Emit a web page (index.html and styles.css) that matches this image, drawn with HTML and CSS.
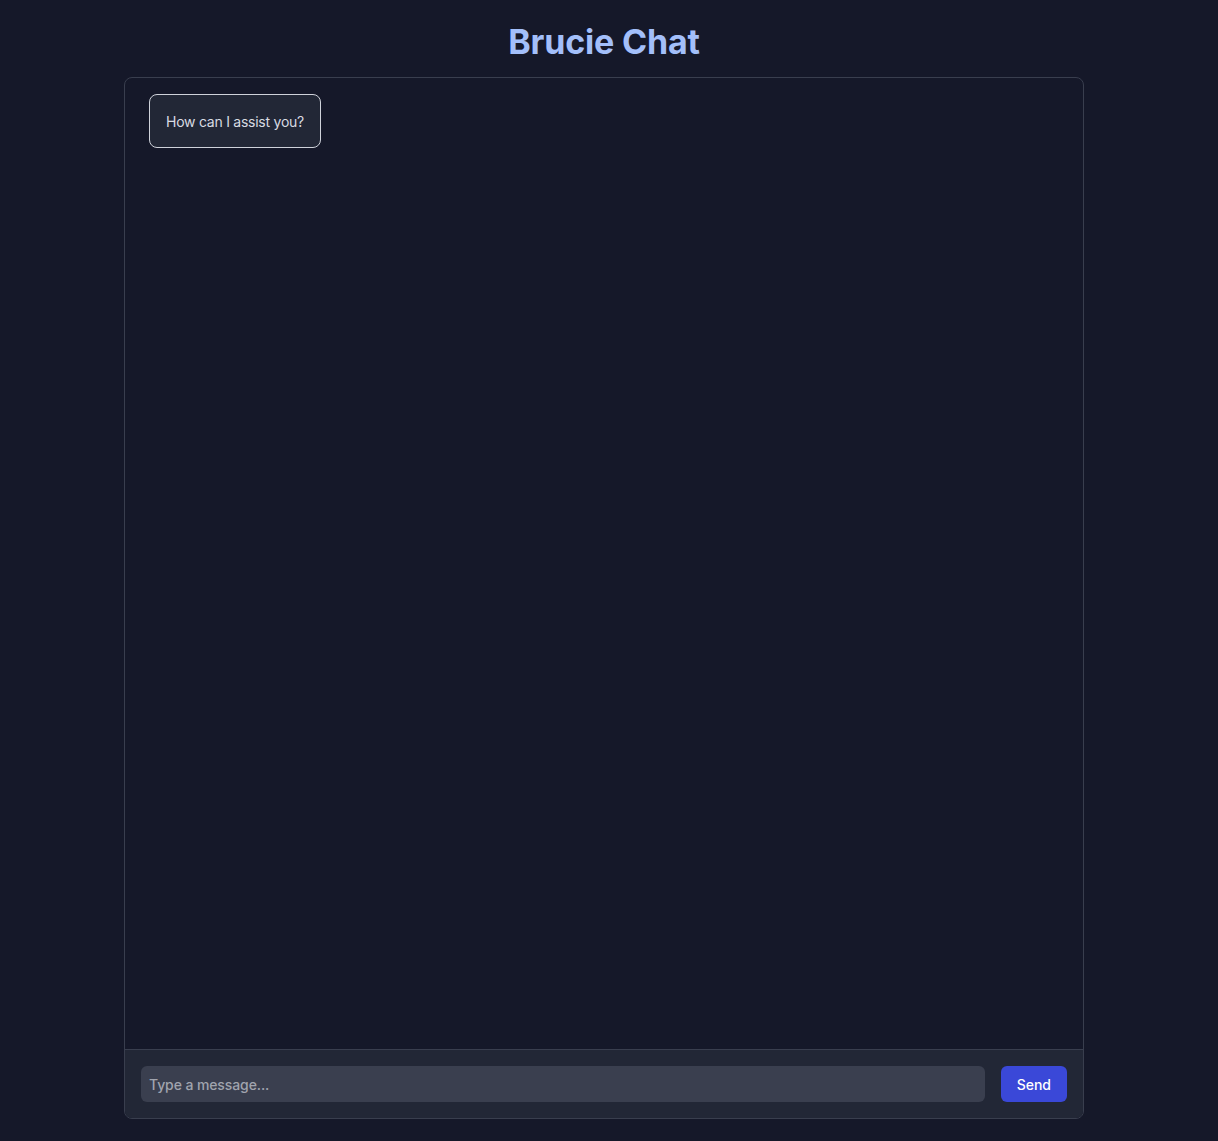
FILE: index.html
```html
<!DOCTYPE html>
<html lang="en">
<head>
<meta charset="utf-8">
<title>Brucie Chat</title>
<link rel="stylesheet" href="styles.css">
</head>
<body>
<div class="app">
  <header class="header">
    <h1 class="title">Brucie Chat</h1>
  </header>
  <section class="chat">
    <div class="messages">
      <div class="bubble">How can I assist you?</div>
    </div>
    <form class="composer">
      <input class="input" type="text" placeholder="Type a message...">
      <button class="send" type="button">Send</button>
    </form>
  </section>
</div>
</body>
</html>
```

FILE: styles.css
```css
* { box-sizing: border-box; }
html, body {
  margin: 0;
  background: #151829;
  font-family: Inter, "Noto Sans", "Liberation Sans", sans-serif;
}
body {
  padding-right: 10px;
}
.app {
  width: 960px;
  margin: 0 auto;
  display: flex;
  flex-direction: column;
}
.header {
  height: 77px;
  display: flex;
  align-items: center;
  justify-content: center;
  padding-top: 7px;
}
.title {
  margin: 0;
  font-size: 34px;
  line-height: 40px;
  font-weight: 700;
  letter-spacing: -0.2px;
  color: #a3bffa;
}
.chat {
  height: 1042px;
  border: 1px solid #393e4e;
  border-radius: 8px;
  display: flex;
  flex-direction: column;
  overflow: hidden;
  background: #151829;
}
.messages {
  flex: 1;
  padding: 16px 24px;
  display: flex;
  flex-direction: column;
  align-items: flex-start;
}
.bubble {
  border: 1px solid #cfd2da;
  border-radius: 8px;
  background: #222736;
  color: #d8dbe2;
  font-size: 14px;
  line-height: 20px;
  letter-spacing: -0.25px;
  padding: 17px 16px 15px;
}
.composer {
  margin: 0;
  border-top: 1px solid #393e4e;
  background: #222736;
  padding: 16px;
  display: flex;
  gap: 16px;
}
.input {
  flex: 1;
  height: 36px;
  border: none;
  border-radius: 6px;
  background: #3a3f4f;
  color: #e5e7eb;
  font-family: inherit;
  font-size: 14px;
  font-weight: 500;
  letter-spacing: -0.1px;
  padding: 0 8px;
  outline: none;
}
.input::placeholder {
  color: #a0a4ae;
}
.send {
  height: 36px;
  border: none;
  border-radius: 6px;
  background: #3a48d8;
  color: #ffffff;
  font-family: inherit;
  font-size: 14px;
  font-weight: 500;
  padding: 0 16px;
}
```
